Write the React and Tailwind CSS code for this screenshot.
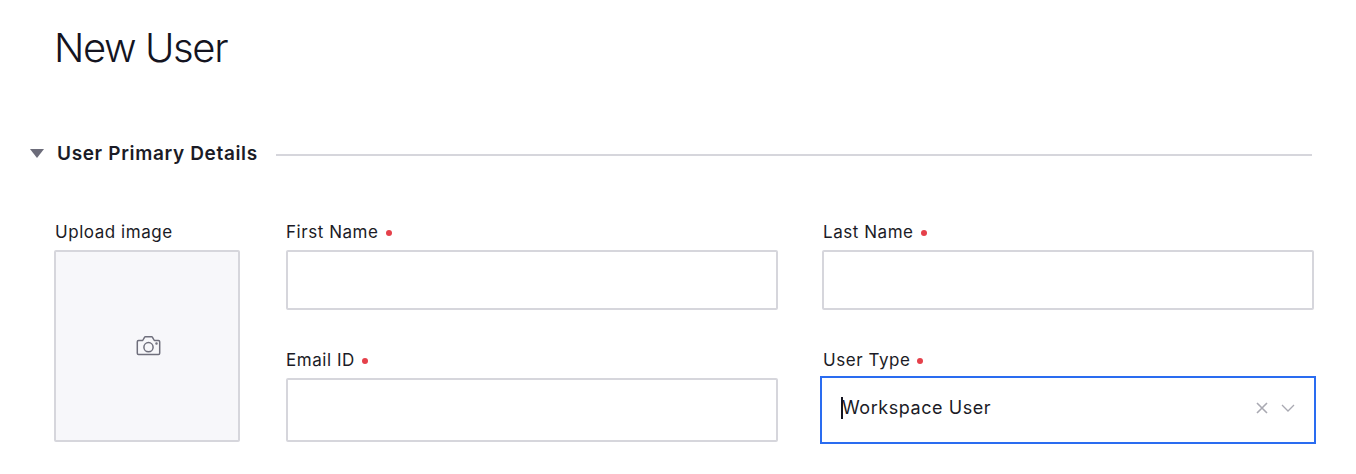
import React from 'react';

function Label({ text, required, nudge }) {
  return (
    <div className={`h-[18px] pt-[2px] flex items-center text-[17px] leading-[18px] tracking-[0.55px] text-[#1b1b26] ${nudge ? 'pl-[1px]' : ''}`}>
      {text}
      {required && <span className="ml-[7px] mt-[2px] w-[6px] h-[6px] rounded-full bg-[#e5404a]" />}
    </div>
  );
}

function CameraIcon() {
  return (
    <svg className="ml-[3px]" width="26" height="24" viewBox="0 0 26 24" fill="none" stroke="#6f6f7c" strokeWidth="1.5" strokeLinejoin="round">
      <path d="M2.500 6.500h4.200l1.800-3.200c.2-.3.4-.5.8-.5h6.400c.4 0 .6.2.8.5l1.800 3.200h4.200c.7 0 1.200.5 1.200 1.200v11.600c0 .7-.5 1.200-1.200 1.200H2.500c-.7 0-1.200-.5-1.200-1.200V7.700c0-.7.5-1.200 1.200-1.200z" />
      <circle cx="12.500" cy="13.200" r="4.600" />
      <circle cx="20.500" cy="9.500" r="0.500" fill="#6f6f7c" />
    </svg>
  );
}

export default function App() {
  return (
    <div className="w-[1356px] h-[474px] overflow-hidden bg-white font-['Inter',sans-serif] text-[#1b1b26]">
      <h1 className="pl-[54px] pt-[24px] h-[120px] text-[40px] leading-[48px] font-light tracking-[-1.4px] text-[#14141f]">New User</h1>

      <div className="flex items-center pl-[30px] pr-[44px] h-[20px] mt-[23px]">
        <span className="w-0 h-0 border-l-[7.5px] border-r-[7.5px] border-t-[9px] border-l-transparent border-r-transparent border-t-[#6c6c7a]" />
        <span className="ml-[13px] pt-[1px] text-[19px] font-semibold tracking-[0.65px] leading-[20px] text-[#1b1b26]">User Primary Details</span>
        <div className="ml-[18px] mt-[3px] flex-1 h-[2px] bg-[#d6d6dc]" />
      </div>

      <div className="flex pl-[54px] pr-[42px] mt-[59px]">
        <div className="w-[186px] shrink-0">
          <Label text="Upload image" nudge />
          <div className="mt-[10px] h-[192px] rounded-[2px] border-2 border-[#d6d6dc] bg-[#f7f7fa] flex items-center justify-center">
            <CameraIcon />
          </div>
        </div>
        <div className="ml-[46px] flex-1 grid grid-cols-[492px_492px] gap-x-[44px]">
          <div>
            <Label text="First Name" required />
            <div className="mt-[10px] h-[60px] rounded-[2px] border-2 border-[#d6d6dc] bg-white" />
          </div>
          <div>
            <Label text="Last Name" required nudge />
            <div className="mt-[10px] h-[60px] rounded-[2px] border-2 border-[#d6d6dc] bg-white" />
          </div>
          <div className="mt-[40px]">
            <Label text="Email ID" required />
            <div className="mt-[10px] h-[64px] rounded-[2px] border-2 border-[#d6d6dc] bg-white" />
          </div>
          <div className="mt-[40px]">
            <Label text="User Type" required nudge />
            <div className="mt-[8px] -mx-[2px] h-[68px] border-2 border-[#2a6cf0] bg-white flex items-center pl-[19px] pr-[19px] pb-[5px]">
              <span className="w-[2px] h-[22px] bg-[#14141f] shrink-0" />
              <span className="-ml-[1px] text-[18px] tracking-[0.55px] text-[#1b1b26]">Workspace User</span>
              <svg className="ml-auto" width="12" height="12" viewBox="0 0 12 12" stroke="#a9a9b2" strokeWidth="1.6" fill="none">
                <path d="M1 1l10 10M11 1L1 11" />
              </svg>
              <svg className="ml-[13px]" width="14" height="8" viewBox="0 0 14 8" stroke="#a9a9b2" strokeWidth="1.3" fill="none">
                <path d="M1 1l6 6 6-6" />
              </svg>
            </div>
          </div>
        </div>
      </div>
    </div>
  );
}
